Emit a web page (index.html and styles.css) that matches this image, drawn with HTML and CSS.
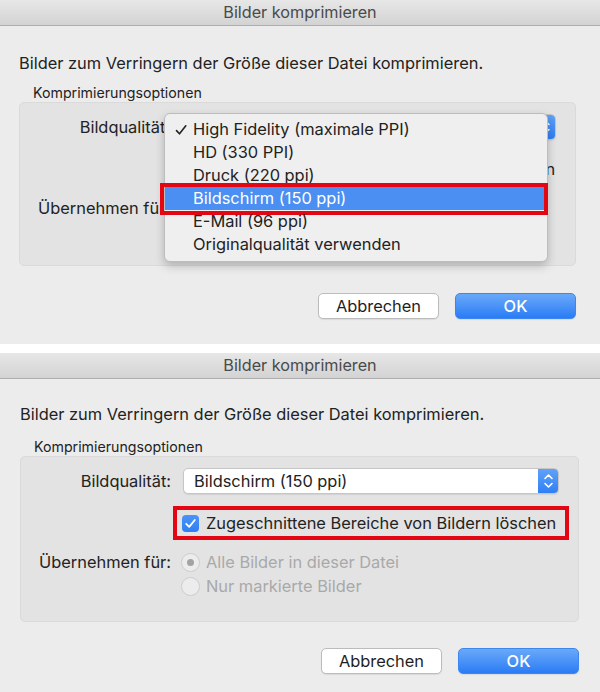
FILE: index.html
```html
<!DOCTYPE html>
<html lang="de">
<head>
<meta charset="utf-8">
<title>Bilder komprimieren</title>
<link rel="stylesheet" href="styles.css">
</head>
<body>
<div class="screen">
  <section class="dialog dialog--top">
    <header class="titlebar">Bilder komprimieren</header>
    <div class="body">
      <p class="intro">Bilder zum Verringern der Größe dieser Datei komprimieren.</p>
      <div class="group-label">Komprimierungsoptionen</div>
      <div class="group">
        <div class="row row--popup">
          <span class="label">Bildqualität:</span>
          <div class="popup">
            <span class="popup-text">High Fidelity (maximale PPI)</span>
            <span class="popup-arrows"><svg width="21" height="26" viewBox="0 0 21 26"><path d="M7 10.5l3.5-3.5 3.5 3.5M7 15.5l3.5 3.5 3.5-3.5" fill="none" stroke="#fff" stroke-width="1.6" stroke-linecap="round" stroke-linejoin="round"/></svg></span>
          </div>
        </div>
        <div class="row row--check">
          <span class="label"></span>
          <div class="check">
            <span class="box"><svg width="17" height="17" viewBox="0 0 17 17"><path d="M4.2 8.8l3 3.1 5.6-6.9" fill="none" stroke="#fff" stroke-width="1.8" stroke-linecap="round" stroke-linejoin="round"/></svg></span>
            <span class="check-text">Zugeschnittene Bereiche von Bildern löschen</span>
          </div>
        </div>
        <div class="row row--apply">
          <span class="label">Übernehmen für:</span>
          <div class="radios">
            <div class="radio"><span class="dot dot--on"></span><span>Alle Bilder in dieser Datei</span></div>
            <div class="radio"><span class="dot"></span><span>Nur markierte Bilder</span></div>
          </div>
        </div>
        <ul class="menu">
          <li class="menu-item"><svg class="tick" width="12" height="12" viewBox="0 0 12 12"><path d="M1.5 6.6l3 3.2L10.8 1.8" fill="none" stroke="#222" stroke-width="1.6" stroke-linecap="round" stroke-linejoin="round"/></svg>High Fidelity (maximale PPI)</li>
          <li class="menu-item">HD (330 PPI)</li>
          <li class="menu-item">Druck (220 ppi)</li>
          <li class="menu-item menu-item--hl">Bildschirm (150 ppi)</li>
          <li class="menu-item">E-Mail (96 ppi)</li>
          <li class="menu-item">Originalqualität verwenden</li>
        </ul>
      </div>
      <div class="buttons">
        <button class="btn">Abbrechen</button>
        <button class="btn btn--primary">OK</button>
      </div>
    </div>
  </section>

  <div class="divider"></div>

  <section class="dialog dialog--bottom">
    <header class="titlebar">Bilder komprimieren</header>
    <div class="body">
      <p class="intro">Bilder zum Verringern der Größe dieser Datei komprimieren.</p>
      <div class="group-label">Komprimierungsoptionen</div>
      <div class="group">
        <div class="row row--popup">
          <span class="label">Bildqualität:</span>
          <div class="popup">
            <span class="popup-text">Bildschirm (150 ppi)</span>
            <span class="popup-arrows"><svg width="21" height="26" viewBox="0 0 21 26"><path d="M7 10.5l3.5-3.5 3.5 3.5M7 15.5l3.5 3.5 3.5-3.5" fill="none" stroke="#fff" stroke-width="1.6" stroke-linecap="round" stroke-linejoin="round"/></svg></span>
          </div>
        </div>
        <div class="row row--check">
          <span class="label"></span>
          <div class="check check--marked">
            <span class="box"><svg width="17" height="17" viewBox="0 0 17 17"><path d="M4.2 8.8l3 3.1 5.6-6.9" fill="none" stroke="#fff" stroke-width="1.8" stroke-linecap="round" stroke-linejoin="round"/></svg></span>
            <span class="check-text">Zugeschnittene Bereiche von Bildern löschen</span>
          </div>
        </div>
        <div class="row row--apply">
          <span class="label">Übernehmen für:</span>
          <div class="radios">
            <div class="radio"><span class="dot dot--on"></span><span>Alle Bilder in dieser Datei</span></div>
            <div class="radio"><span class="dot"></span><span>Nur markierte Bilder</span></div>
          </div>
        </div>
      </div>
      <div class="buttons">
        <button class="btn">Abbrechen</button>
        <button class="btn btn--primary">OK</button>
      </div>
    </div>
  </section>
</div>
</body>
</html>
```

FILE: styles.css
```css
* { box-sizing: border-box; }

html, body {
  margin: 0;
  padding: 0;
  background: #ececec;
}

body {
  font-family: "Inter", "Liberation Sans", "Noto Sans", sans-serif;
  font-size: 16.4px;
  color: #222;
  width: 600px;
  height: 692px;
  overflow: hidden;
}

.screen {
  display: flex;
  flex-direction: column;
}

.dialog {
  background: #ececec;
}

.divider {
  height: 9px;
  background: #ffffff;
}

.titlebar {
  height: 26px;
  line-height: 25px;
  text-align: center;
  color: #4a4a4a;
  font-size: 16.2px;
  background: linear-gradient(#e7e7e7, #d3d3d3);
  border-bottom: 1px solid #aeaeae;
}

.body {
  display: flex;
  flex-direction: column;
}

.dialog--top .body { padding: 27px 24px 25px 19px; }
.dialog--bottom .body { padding: 25px 21px 18px 20px; }

.intro {
  margin: 0;
  line-height: 20px;
  white-space: nowrap;
}

.group-label {
  font-size: 14.2px;
  line-height: 16px;
  padding-left: 14px;
  margin-top: 12px;
}
.dialog--bottom .group-label { margin-top: 15px; }

.group {
  position: relative;
  margin-top: 1px;
  background: #e3e3e3;
  border: 1px solid #dadada;
  border-radius: 5px;
  padding: 11px 19px 21px 0;
}
.dialog--bottom .group { padding: 11px 19px 23px 0; }

.row {
  display: grid;
  grid-template-columns: 150px 1fr;
  column-gap: 12px;
  align-items: center;
}

.label {
  text-align: right;
  white-space: nowrap;
}

.row--popup { height: 26px; }

.popup {
  height: 26px;
  display: flex;
  align-items: center;
  background: #fff;
  border: 1px solid #c6c6c6;
  border-radius: 5px;
  box-shadow: 0 1px 1px rgba(0, 0, 0, 0.08);
  overflow: hidden;
}

.popup-text {
  flex: 1;
  padding-left: 10px;
  white-space: nowrap;
}

.popup-arrows {
  width: 21px;
  height: 26px;
  margin: -1px -1px -1px 0;
  display: flex;
  background: linear-gradient(#62a3f9, #2d7ef4);
  border-radius: 0 5px 5px 0;
}

.row--check {
  height: 22px;
  margin-top: 18px;
}

.check {
  display: flex;
  align-items: center;
  gap: 7px;
  margin: -6px 0 -6px -10px;
  padding: 3px 9px 3px 5px;
  border: 4px solid transparent;
  justify-self: start;
  white-space: nowrap;
}

.check--marked {
  border-color: #e30613;
}

.box {
  width: 17px;
  height: 17px;
  border-radius: 4px;
  background: linear-gradient(#4b93f8, #2f7ff3);
  display: flex;
}

.row--apply {
  margin-top: 16px;
  align-items: start;
}

.row--apply .label { line-height: 24px; }

.radios {
  display: flex;
  flex-direction: column;
  margin-left: -2px;
}

.radio {
  height: 24px;
  display: flex;
  align-items: center;
  gap: 6px;
  color: #a9a9a9;
  white-space: nowrap;
}

.dot {
  width: 19px;
  height: 19px;
  border-radius: 50%;
  background: #ececec;
  border: 1px solid #cdcdcd;
  display: flex;
  align-items: center;
  justify-content: center;
}

.dot--on::after {
  content: "";
  width: 7px;
  height: 7px;
  border-radius: 50%;
  background: #a3a3a3;
}

/* popup menu overlay */
.menu {
  position: absolute;
  left: 144px;
  top: 10px;
  width: 384px;
  height: 149px;
  margin: 0;
  padding: 4px 0 0;
  list-style: none;
  background: #efefef;
  border: 1px solid #bdbdbd;
  border-radius: 6px;
  box-shadow: 0 4px 10px rgba(0, 0, 0, 0.22);
}

.menu-item {
  position: relative;
  height: 23px;
  line-height: 23px;
  padding-left: 28px;
  white-space: nowrap;
}

.tick {
  position: absolute;
  left: 10px;
  top: 6px;
}

.menu-item--hl {
  background: #4a8ff1;
  color: #fff;
}

.menu-item--hl::after {
  content: "";
  position: absolute;
  left: -5px;
  right: -1px;
  top: -4px;
  bottom: -5px;
  border: 4px solid #e30613;
}

.buttons {
  display: flex;
  justify-content: flex-end;
  gap: 16px;
  margin-top: 27px;
}
.dialog--bottom .buttons { margin-top: 26px; }

.btn {
  width: 121px;
  height: 26px;
  font-family: inherit;
  font-size: 16.4px;
  color: #1e1e1e;
  background: #fff;
  border: 1px solid #bcbcbc;
  border-radius: 5px;
  box-shadow: 0 1px 1px rgba(0, 0, 0, 0.08);
  padding: 0;
}

.btn--primary {
  color: #fff;
  font-weight: 500;
  background: linear-gradient(#6aa9fa, #2a7cf5);
  border-color: #3d86f0;
}
```
